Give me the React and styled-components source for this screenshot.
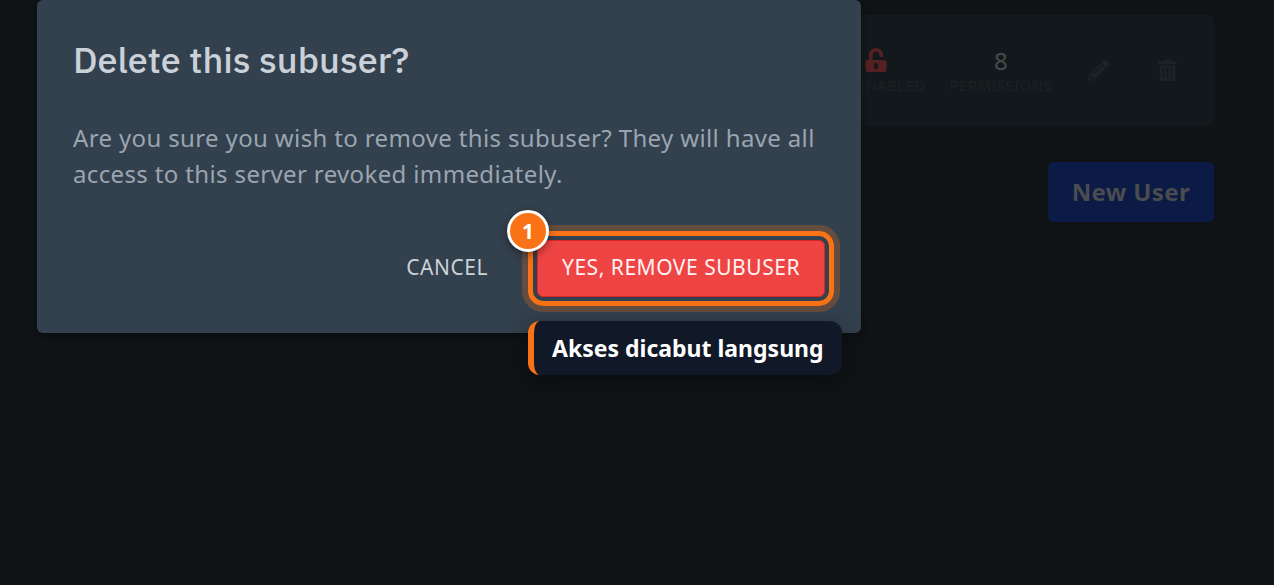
import React from "react";
import styled, { createGlobalStyle } from "styled-components";
import { FaPencilAlt, FaTrashAlt, FaUnlockAlt } from "react-icons/fa";

const App = () => {
  return (
    <>
      <GlobalStyle />
      <Page>
        <UserRow>
          <Stat>
            <Value $danger>
              <FaUnlockAlt />
            </Value>
            <Label>2FA Enabled</Label>
          </Stat>
          <Stat>
            <Value>8</Value>
            <Label>Permissions</Label>
          </Stat>
          <Actions>
            <IconButton type="button" aria-label="Edit subuser">
              <FaPencilAlt />
            </IconButton>
            <IconButton type="button" aria-label="Delete subuser">
              <FaTrashAlt />
            </IconButton>
          </Actions>
        </UserRow>
        <NewUser type="button">New User</NewUser>
      </Page>
      <Overlay>
        <Modal role="dialog" aria-labelledby="modal-title">
          <Title id="modal-title">Delete this subuser?</Title>
          <Message>
            Are you sure you wish to remove this subuser? They will have all
            access to this server revoked immediately.
          </Message>
          <Footer>
            <Button type="button">Cancel</Button>
            <Highlight>
              <Button type="button" $danger>
                Yes, Remove Subuser
              </Button>
              <Ring />
              <Step>1</Step>
              <Hint role="tooltip">Akses dicabut langsung</Hint>
            </Highlight>
          </Footer>
        </Modal>
      </Overlay>
    </>
  );
};

const GlobalStyle = createGlobalStyle`
  * {
    box-sizing: border-box;
  }
  body {
    margin: 0;
    background: #0f1316;
    font-family: "Noto Sans", sans-serif;
  }
  button {
    font-family: inherit;
    cursor: pointer;
  }
`;

const Page = styled.main`
  display: flex;
  flex-direction: column;
  align-items: flex-end;
  gap: 36px;
  padding: 15px 60px;
`;

const UserRow = styled.div`
  display: flex;
  justify-content: flex-end;
  align-items: center;
  gap: 24px;
  width: 100%;
  height: 111px;
  padding: 0 24px;
  border-radius: 6px;
  background: #12181b;
`;

const Stat = styled.div`
  display: flex;
  flex-direction: column;
  align-items: center;
`;

const Value = styled.div`
  display: flex;
  align-items: center;
  height: 30px;
  font-size: 24px;
  color: ${(props) => (props.$danger ? "#552022" : "#484b4e")};
`;

const Label = styled.div`
  font-size: 15px;
  line-height: 21px;
  letter-spacing: 0.025em;
  text-transform: uppercase;
  color: #1d2124;
`;

const Actions = styled.div`
  display: flex;
  gap: 24px;
`;

const IconButton = styled.button`
  display: flex;
  padding: 12px;
  border: 0;
  background: none;
  color: #1e2227;
  font-size: 21px;
`;

const NewUser = styled.button`
  height: 60px;
  padding: 0 24px 2px;
  border: 0;
  border-radius: 6px;
  background: #0b1b45;
  color: #4a4c50;
  font-size: 24px;
  font-weight: 700;
  letter-spacing: 0.015em;
`;

const Overlay = styled.div`
  position: absolute;
  top: 0;
  left: 0;
  width: 100%;
  padding: 0 37px;
`;

const Modal = styled.section`
  max-width: 824px;
  padding: 36px;
  border-radius: 6px;
  background: #33404d;
  box-shadow: 0 3px 6px rgba(0, 0, 0, 0.3);
`;

const Title = styled.h2`
  margin: 0 0 36px;
  font-family: "IBM Plex Sans", "Noto Sans", sans-serif;
  font-size: 36px;
  line-height: 48px;
  font-weight: 500;
  color: #cad1d8;
`;

const Message = styled.p`
  margin: 0 0 48px;
  font-size: 24px;
  line-height: 36px;
  letter-spacing: 0.015em;
  color: #9aa5b1;
`;

const Footer = styled.div`
  display: flex;
  justify-content: flex-end;
  gap: 24px;
`;

const Button = styled.button`
  height: 57px;
  padding: 0 24px 3px;
  border: 1px solid ${(props) => (props.$danger ? "#dc2626" : "transparent")};
  border-radius: 6px;
  background: ${(props) => (props.$danger ? "#ef4444" : "transparent")};
  color: ${(props) => (props.$danger ? "#fef2f2" : "#cad1d8")};
  font-size: 21px;
  letter-spacing: 0.025em;
  text-transform: uppercase;
`;

const Highlight = styled.div`
  position: relative;
`;

const Ring = styled.div`
  position: absolute;
  inset: -9px;
  border: 5px solid #f97316;
  border-radius: 15px;
  box-shadow: 0 0 0 6px rgba(249, 115, 22, 0.25);
  pointer-events: none;
`;

const Step = styled.span`
  position: absolute;
  top: -30px;
  left: -30px;
  display: flex;
  justify-content: center;
  align-items: center;
  width: 42px;
  height: 42px;
  border: 3px solid #fff;
  border-radius: 50%;
  background: #f97316;
  box-shadow: 0 3px 9px rgba(0, 0, 0, 0.4);
  color: #fff;
  font-size: 21px;
  font-weight: 700;
`;

const Hint = styled.span`
  position: absolute;
  top: 81px;
  left: -9px;
  padding: 0 18px;
  border-left: 6px solid #f97316;
  border-radius: 12px;
  background: #111827;
  box-shadow: 0 6px 24px rgba(0, 0, 0, 0.35);
  color: #fff;
  font-size: 23px;
  line-height: 54px;
  font-weight: 700;
  white-space: nowrap;
`;

export default App;
